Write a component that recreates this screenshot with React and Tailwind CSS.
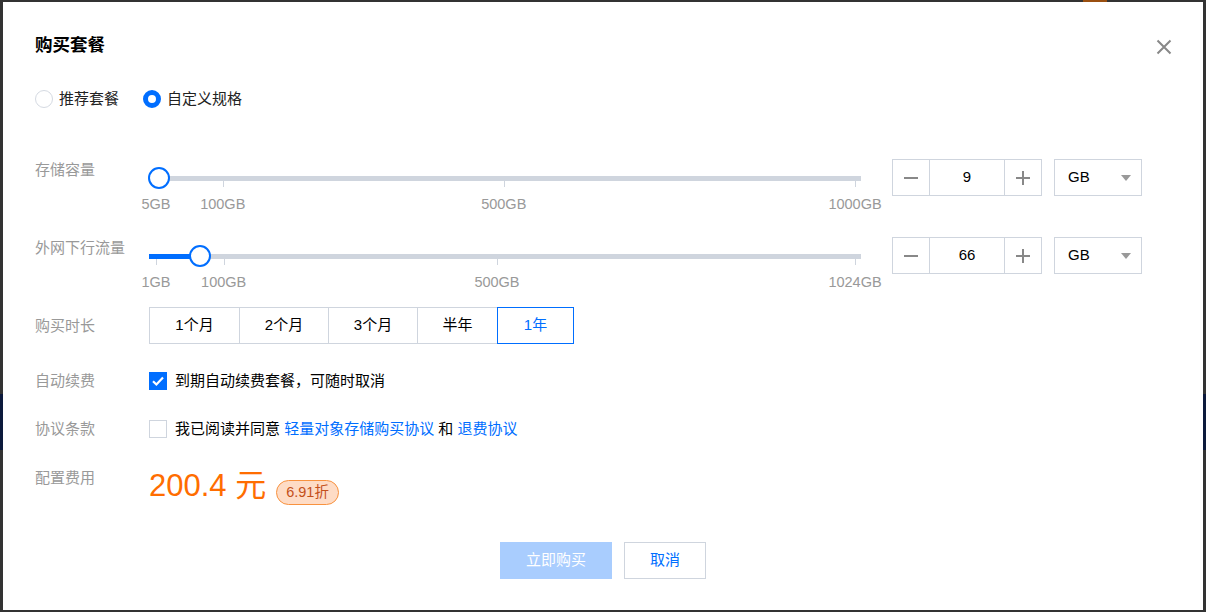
import React from "react";

const font = "font-['Liberation_Sans','Noto_Sans_CJK_SC',sans-serif]";

function Slider({ min, max, value, marks }) {
  const pos = (v) => ((v - min) / (max - min)) * 699 + 7;
  return (
    <div className="relative h-[56px] w-[712px] shrink-0">
      <div className="absolute left-0 top-[17px] h-[5px] w-full bg-[#cfd5de]" />
      <div className="absolute left-0 top-[17px] h-[5px] bg-[#006eff]" style={{ width: pos(value) }} />
      {marks.map((m) => (
        <React.Fragment key={m}>
          <div className="absolute top-[22px] h-[6px] w-px bg-[#cfd5de]" style={{ left: pos(m) }} />
          <div
            className="absolute top-[35px] -translate-x-1/2 whitespace-nowrap text-[14.5px] leading-[20px] text-[#999]"
            style={{ left: pos(m) }}
          >
            {m}GB
          </div>
        </React.Fragment>
      ))}
      <div
        className="absolute top-[8px] h-[22px] w-[22px] -translate-x-1/2 rounded-full border-2 border-[#006eff] bg-white"
        style={{ left: pos(value) }}
      />
    </div>
  );
}

function NumberInput({ value }) {
  return (
    <div className="ml-[31px] flex items-center">
      <div className="flex h-[37px] w-[150px] border border-[#cfd5de]">
        <div className="flex w-[37px] items-center justify-center border-r border-[#cfd5de]">
          <svg width="14" height="14" viewBox="0 0 14 14">
            <path d="M0 7h14" stroke="#888" strokeWidth="2" />
          </svg>
        </div>
        <div className="flex w-[75px] items-center justify-center border-r border-[#cfd5de] text-[15px] text-black">
          {value}
        </div>
        <div className="flex w-[36px] items-center justify-center">
          <svg width="14" height="14" viewBox="0 0 14 14">
            <path d="M0 7h14M7 0v14" stroke="#888" strokeWidth="2" />
          </svg>
        </div>
      </div>
      <div className="ml-[12px] flex h-[37px] w-[88px] items-center justify-between border border-[#cfd5de] pl-[13px] pr-[10px] text-[15px] text-black">
        <span>GB</span>
        <svg width="10" height="6" viewBox="0 0 10 6">
          <path d="M0 0h10L5 6z" fill="#999" />
        </svg>
      </div>
    </div>
  );
}

function Label({ children, className = "" }) {
  return <div className={"w-[114px] shrink-0 text-[15px] leading-[20px] text-[#999] " + className}>{children}</div>;
}

const durations = [
  { t: "1个月", w: "w-[91px]" },
  { t: "2个月", w: "w-[90px]" },
  { t: "3个月", w: "w-[90px]" },
  { t: "半年", w: "w-[81px]" },
  { t: "1年", w: "w-[77px]", active: true },
];

export default function App() {
  return (
    <div className={"relative h-[612px] w-[1206px] overflow-hidden bg-[#333] pl-[3px] pt-[2px] " + font}>
      <div className="absolute left-0 top-[394px] h-[56px] w-full bg-[#0c1a3c]" />
      <div className="absolute left-[1083px] top-0 h-[2px] w-[24px] bg-[#9a4f10]" />

      <div className="relative flex h-[608px] w-[1200px] flex-col bg-white pl-[32px] pt-[31px]">
        <div className="text-[17.5px] font-bold leading-[24px] text-black">购买套餐</div>
        <button className="absolute right-[31px] top-[37px]">
          <svg width="16" height="16" viewBox="0 0 16 16">
            <path d="M1.5 1.5l13 13M14.5 1.5l-13 13" stroke="#888" strokeWidth="2" />
          </svg>
        </button>

        <div className="mt-[32px] flex h-[20px] items-center text-[15px] text-[#222]">
          <span className="h-[18px] w-[18px] rounded-full border border-[#d5dae2] bg-white" />
          <span className="ml-[6px]">推荐套餐</span>
          <span className="ml-[24px] h-[18px] w-[18px] rounded-full border-[5px] border-[#006eff] bg-white" />
          <span className="ml-[6px]">自定义规格</span>
        </div>

        <div className="mt-[50px] flex items-start">
          <Label className="mt-px">存储容量</Label>
          <Slider min={5} max={1000} value={9} marks={[5, 100, 500, 1000]} />
          <NumberInput value={9} />
        </div>

        <div className="mt-[22px] flex items-start">
          <Label className="mt-px">外网下行流量</Label>
          <Slider min={1} max={1024} value={66} marks={[1, 100, 500, 1024]} />
          <NumberInput value={66} />
        </div>

        <div className="mt-[14px] flex items-center">
          <Label>购买时长</Label>
          <div className="flex">
            {durations.map((d, i) =>
              d.active ? (
                <div
                  key={d.t}
                  className={"relative z-10 -ml-px flex h-[37px] items-center justify-center border border-[#006eff] text-[15px] text-[#006eff] " + d.w}
                >
                  {d.t}
                </div>
              ) : (
                <div
                  key={d.t}
                  className={
                    "flex h-[37px] items-center justify-center border border-[#cfd5de] text-[15px] text-black " +
                    d.w +
                    (i > 0 ? " -ml-px" : "")
                  }
                >
                  {d.t}
                </div>
              )
            )}
          </div>
        </div>

        <div className="mt-[27px] flex items-center">
          <Label>自动续费</Label>
          <span className="flex h-[18px] w-[18px] items-center justify-center bg-[#006eff]">
            <svg width="14" height="14" viewBox="0 0 14 14">
              <path d="M2 7.2l3.4 3.3L12 3.5" stroke="#fff" strokeWidth="2.2" fill="none" />
            </svg>
          </span>
          <span className="ml-[8px] text-[15px] leading-[20px] text-black">到期自动续费套餐，可随时取消</span>
        </div>

        <div className="mt-[28px] flex items-center">
          <Label>协议条款</Label>
          <span className="h-[18px] w-[18px] border border-[#cfd5de] bg-white" />
          <span className="ml-[8px] text-[15px] leading-[20px] text-black">
            我已阅读并同意 <span className="text-[#006eff]">轻量对象存储购买协议</span> 和{" "}
            <span className="text-[#006eff]">退费协议</span>
          </span>
        </div>

        <div className="mt-[27px] flex items-start">
          <Label className="mt-[2px]">配置费用</Label>
          <div className="flex items-end">
            <span className="text-[31px] leading-[40px] text-[#ff6d00]">200.4 元</span>
            <span className="mb-[1px] ml-[10px] flex h-[25px] items-center rounded-full border border-[#f8923f] bg-[#fedcc6] px-[9px] text-[14.5px] text-[#c4501a]">
              6.91折
            </span>
          </div>
        </div>

        <div className="mt-[36px] flex justify-center gap-[12px] pr-[32px]">
          <button className="h-[37px] w-[112px] bg-[#a9cdfe] text-[15px] text-white">立即购买</button>
          <button className="h-[37px] w-[82px] border border-[#cfd5de] bg-white text-[15px] text-[#006eff]">取消</button>
        </div>
      </div>
    </div>
  );
}
